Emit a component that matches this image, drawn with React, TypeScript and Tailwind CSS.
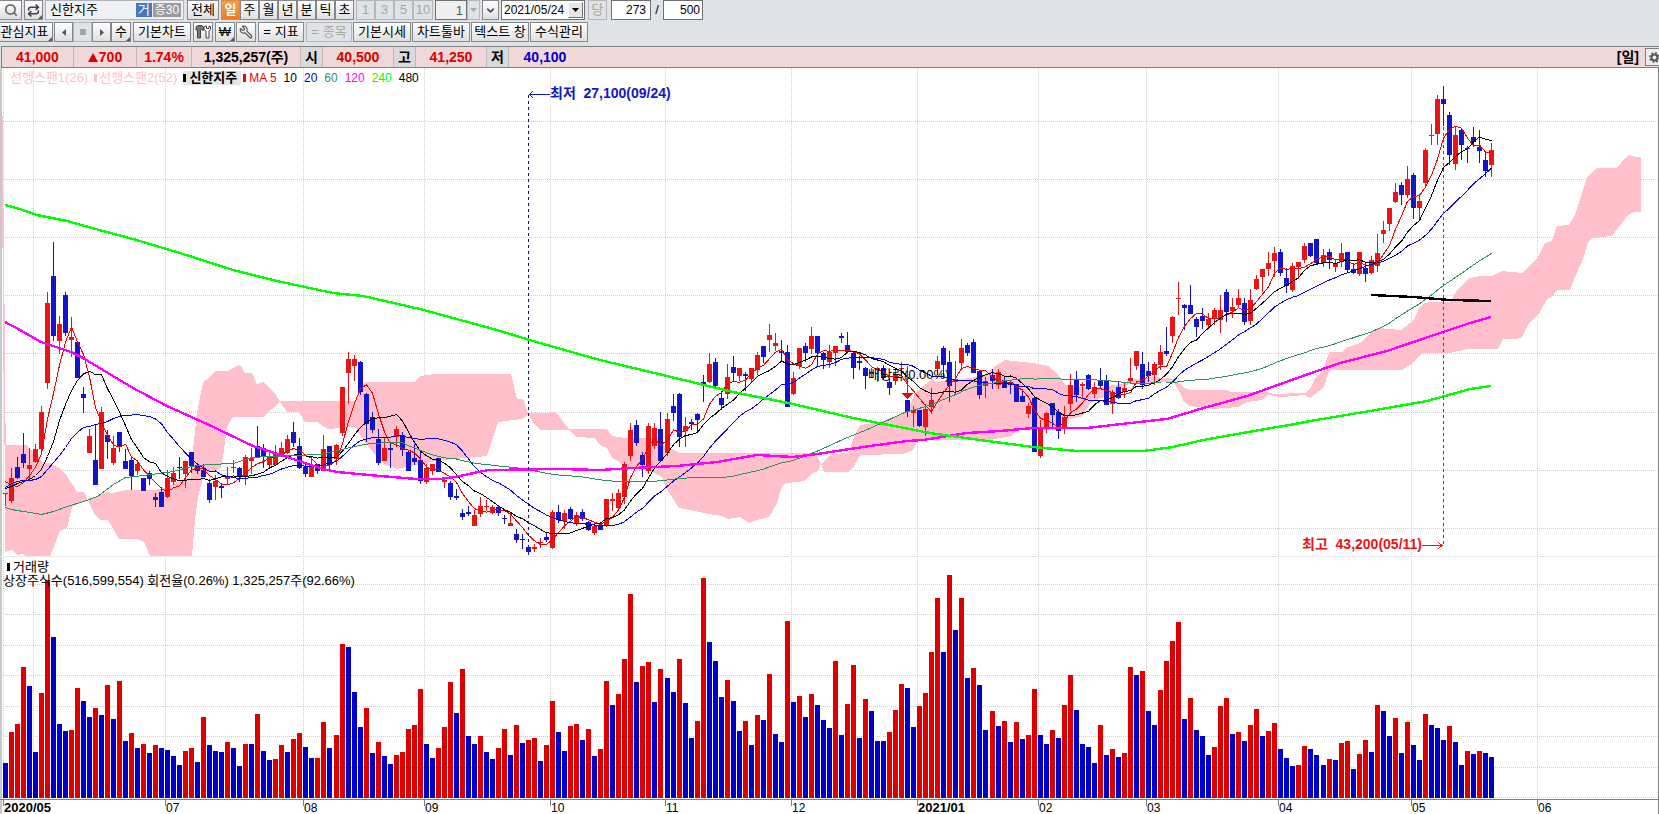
import React from 'react';
import { Search, Repeat, Wrench, ChevronDown } from 'lucide-react';

// All chart values are in pixels, measured from the top of the window.
const PRICE_TOP = 68;
const VOLUME_TOP = 557;
const VOLUME_BASE = 798;
const BAR_STEP = 6.0183;

const barX = (i: number) => 5 + Math.floor(i * BAR_STEP);

// [up, high, body top, body bottom, low]
const candles: number[][] = [
    [1, 493, 493, 494, 506], [1, 468, 478, 501, 503], [0, 457, 467, 478, 479], [0, 433, 454, 463, 468],
    [1, 448, 465, 469, 479], [1, 444, 449, 462, 463], [1, 406, 412, 449, 455], [1, 292, 303, 383, 389],
    [0, 242, 276, 336, 341], [1, 316, 324, 341, 354], [0, 292, 295, 333, 336], [1, 317, 337, 340, 357],
    [0, 342, 342, 378, 378], [0, 387, 394, 398, 413], [1, 429, 436, 453, 453], [0, 424, 460, 485, 485],
    [1, 407, 412, 469, 469], [0, 430, 435, 442, 459], [1, 436, 448, 463, 465], [0, 432, 432, 447, 452],
    [0, 449, 461, 469, 469], [0, 456, 460, 476, 490], [1, 460, 464, 471, 475], [0, 478, 478, 491, 491],
    [0, 471, 473, 479, 485], [0, 493, 497, 500, 507], [0, 487, 492, 507, 507], [1, 470, 478, 497, 498],
    [1, 467, 473, 482, 485], [0, 457, 467, 468, 479], [1, 461, 461, 474, 488], [0, 452, 452, 466, 473],
    [0, 463, 465, 471, 474], [0, 464, 470, 477, 477], [0, 479, 483, 500, 503], [1, 475, 481, 487, 500],
    [0, 483, 486, 488, 498], [1, 467, 476, 479, 484], [1, 460, 467, 468, 473], [0, 467, 468, 477, 482],
    [1, 455, 457, 477, 485], [1, 448, 458, 461, 474], [0, 426, 446, 457, 458], [0, 444, 448, 457, 468],
    [1, 451, 456, 465, 467], [1, 445, 454, 465, 465], [1, 442, 448, 457, 457], [1, 435, 439, 453, 454],
    [0, 422, 432, 443, 447], [0, 438, 446, 468, 469], [0, 462, 467, 474, 477], [1, 457, 466, 477, 477],
    [0, 464, 464, 471, 474], [1, 435, 449, 471, 471], [0, 446, 446, 465, 469], [1, 444, 445, 459, 465],
    [1, 387, 387, 433, 436], [1, 352, 359, 373, 404], [1, 355, 359, 366, 381], [0, 361, 362, 392, 395],
    [0, 393, 394, 424, 442], [0, 412, 417, 430, 433], [0, 429, 439, 463, 465], [1, 438, 448, 461, 461],
    [0, 444, 448, 450, 468], [1, 426, 429, 437, 447], [0, 432, 435, 450, 456], [0, 451, 452, 471, 471],
    [0, 444, 458, 462, 465], [0, 450, 460, 481, 484], [1, 464, 468, 482, 484], [1, 464, 464, 471, 475],
    [0, 458, 458, 472, 472], [1, 478, 480, 482, 488], [0, 481, 483, 497, 500], [0, 489, 496, 498, 500],
    [0, 509, 513, 517, 520], [0, 506, 512, 514, 516], [1, 510, 515, 526, 526], [1, 497, 506, 514, 517],
    [1, 500, 506, 507, 511], [1, 505, 507, 513, 514], [0, 505, 507, 513, 516], [0, 515, 518, 519, 524],
    [1, 513, 523, 526, 526], [0, 529, 534, 540, 543], [0, 534, 539, 540, 549], [0, 545, 547, 552, 555],
    [1, 544, 547, 549, 552], [1, 538, 542, 543, 548], [0, 533, 537, 540, 542], [1, 510, 512, 548, 549],
    [0, 505, 512, 520, 523], [1, 510, 513, 521, 529], [0, 507, 509, 519, 520], [1, 512, 515, 524, 526],
    [0, 509, 512, 519, 521], [0, 521, 522, 530, 531], [1, 522, 526, 533, 535], [0, 523, 525, 530, 530],
    [1, 499, 499, 526, 527], [1, 493, 499, 501, 511], [1, 489, 493, 508, 510], [1, 462, 464, 497, 504],
    [1, 423, 430, 456, 461], [0, 420, 425, 443, 446], [0, 452, 455, 465, 477], [1, 423, 426, 471, 474],
    [1, 423, 428, 446, 449], [0, 412, 429, 461, 461], [1, 413, 419, 453, 456], [0, 394, 406, 413, 421],
    [0, 393, 394, 437, 447], [1, 417, 426, 431, 447], [0, 419, 422, 424, 430], [0, 413, 414, 420, 432],
    [0, 375, 382, 385, 402], [1, 353, 364, 382, 383], [0, 358, 362, 386, 387], [0, 391, 398, 405, 410],
    [1, 364, 377, 394, 399], [0, 356, 367, 373, 381], [1, 368, 368, 376, 381], [0, 372, 374, 376, 391],
    [1, 368, 368, 379, 383], [1, 352, 355, 370, 375], [0, 346, 346, 357, 363], [1, 324, 335, 340, 352],
    [1, 333, 343, 346, 351], [0, 340, 351, 353, 361], [0, 345, 352, 407, 407], [1, 372, 378, 394, 395],
    [1, 348, 348, 366, 369], [0, 343, 346, 353, 362], [1, 327, 336, 349, 354], [0, 336, 336, 353, 366],
    [0, 352, 353, 360, 369], [1, 345, 352, 362, 368], [1, 346, 346, 353, 366], [0, 333, 336, 338, 343],
    [0, 332, 345, 352, 352], [0, 352, 353, 368, 379], [0, 356, 361, 363, 370], [0, 367, 368, 376, 389],
    [1, 368, 372, 374, 377], [1, 367, 368, 370, 382], [0, 365, 368, 378, 380], [0, 378, 382, 388, 395],
    [1, 370, 374, 381, 385], [1, 362, 368, 369, 376], [0, 400, 400, 412, 417], [1, 406, 410, 413, 427],
    [0, 410, 410, 426, 427], [1, 404, 409, 427, 436], [1, 388, 400, 407, 414], [1, 356, 361, 369, 375],
    [0, 346, 348, 365, 378], [0, 351, 362, 386, 402], [1, 361, 379, 382, 395], [1, 339, 348, 363, 370],
    [0, 343, 345, 353, 356], [0, 339, 342, 373, 373], [0, 370, 371, 395, 399], [1, 377, 381, 386, 398],
    [0, 369, 375, 381, 389], [1, 369, 372, 385, 389], [0, 377, 380, 388, 388], [0, 380, 382, 385, 394],
    [0, 384, 384, 402, 402], [0, 389, 396, 402, 402], [1, 403, 406, 414, 418], [0, 397, 398, 452, 452],
    [1, 420, 427, 456, 458], [1, 412, 413, 428, 433], [0, 403, 403, 415, 429], [0, 409, 412, 431, 439],
    [1, 406, 417, 428, 434], [1, 374, 385, 404, 411], [0, 371, 379, 395, 402], [1, 382, 384, 386, 398],
    [0, 374, 375, 389, 390], [1, 382, 387, 394, 398], [0, 368, 381, 386, 389], [0, 375, 381, 405, 405],
    [1, 390, 392, 404, 414], [0, 382, 387, 398, 399], [1, 382, 388, 392, 398], [1, 358, 378, 381, 384],
    [1, 351, 351, 366, 370], [0, 352, 364, 385, 389], [0, 362, 371, 376, 382], [1, 362, 364, 375, 385],
    [1, 345, 352, 365, 370], [0, 327, 351, 354, 356], [1, 316, 317, 336, 343], [1, 282, 298, 299, 315],
    [0, 304, 305, 308, 330], [0, 285, 305, 314, 314], [0, 317, 319, 327, 337], [0, 308, 316, 321, 329],
    [1, 313, 319, 325, 327], [1, 308, 310, 318, 325], [1, 295, 310, 320, 333], [0, 289, 292, 312, 322],
    [1, 298, 307, 311, 318], [1, 289, 298, 305, 308], [0, 298, 303, 322, 325], [1, 289, 300, 321, 325],
    [1, 275, 279, 289, 290], [1, 269, 269, 277, 292], [1, 252, 263, 269, 276], [1, 247, 253, 261, 277],
    [0, 249, 252, 273, 276], [0, 268, 278, 286, 293], [1, 263, 266, 290, 292], [1, 262, 262, 267, 279],
    [1, 243, 246, 260, 263], [0, 243, 243, 256, 257], [0, 239, 239, 263, 264], [1, 249, 255, 263, 267],
    [0, 249, 252, 260, 269], [1, 260, 263, 267, 272], [1, 243, 253, 262, 267], [0, 252, 252, 270, 272],
    [0, 263, 269, 273, 274], [1, 252, 252, 274, 276], [0, 263, 268, 274, 282], [1, 256, 260, 273, 274],
    [1, 234, 253, 266, 272], [1, 221, 230, 234, 243], [1, 208, 208, 224, 231], [1, 183, 192, 202, 203],
    [0, 182, 185, 195, 205], [1, 166, 179, 195, 198], [0, 173, 175, 208, 219], [1, 194, 201, 208, 221],
    [1, 148, 150, 183, 187], [1, 124, 135, 136, 145], [1, 95, 99, 134, 145], [0, 86, 99, 104, 126],
    [0, 112, 115, 155, 165], [1, 127, 135, 164, 170], [0, 128, 130, 145, 160], [0, 146, 148, 149, 163],
    [0, 127, 137, 142, 147], [0, 130, 147, 151, 163], [0, 151, 160, 171, 177], [1, 143, 150, 165, 177],
];

// Bar heights, negative when volume fell against the day before
const volumes: number[] = [
    -35, 66, 74, 131, -112, -46, 105, 218, -161, -74, -67, 68, 110, -97, -81, 90, -83, 113, -79, 117,
    -57, 65, -50, 54, -45, 53, -50, -48, -42, -33, 47, 50, -36, 81, -53, -47, -46, 56, -50, -32,
    54, -54, 84, -47, -38, 39, 53, -46, 59, 65, -51, -40, 40, 76, -50, 63, 154, -151, -106, -71,
    90, -45, 56, -42, -34, 43, 46, 69, 73, 109, -54, -40, 50, 71, 116, -85, 129, -62, -54, 62,
    -46, -39, 50, 69, -43, 73, -55, 58, 60, -37, 53, 97, -66, -47, 72, 74, -58, 69, -42, 49,
    117, -93, 104, 139, 204, -116, 132, 136, -96, 129, -120, -106, 139, -95, -60, 77, 220, -156, -137, -101,
    118, -97, -67, 77, -53, 83, -78, 124, -64, -56, 177, -96, 102, -81, 104, -93, -78, -70, 137, -63,
    94, 133, -60, 99, -87, -57, -57, 66, 88, 114, -110, -71, 92, 105, 146, 200, -146, 223, -168, 200,
    -120, 130, -113, -68, 87, -72, 77, -56, 76, -59, 63, 109, -63, -54, 68, -60, 93, 123, -88, -54,
    -51, -35, 73, -43, 49, -41, 45, 131, -123, 127, -87, -73, 108, 137, 157, 176, -79, 100, -68, -62,
    -43, 51, 92, 100, -64, 66, -57, 73, 89, -62, 67, 75, -49, -40, -32, 33, 52, -49, -43, -33,
    39, -38, 55, 57, -29, 44, 58, -46, 93, -87, -62, 80, -45, 76, -53, -38, 84, -73, -70, -58,
    72, -56, -33, 47, -44, 47, -45, -41,
];

const clouds: string[] = [
    '2,116 3,116 3,209 4,209 4,304 5,304 5,400 6,445 4,445 4,372 3,372 3,248 2,248',
    '5,445 27,445 34,453 42,462 50,463 59,468 65,473 77,492 84,492 88,501 77,503 72,507 67,528 60,531 53,549 50,556 25,556 23,554 17,555 12,550 5,552',
    '88,501 100,495 107,492 113,493 126,490 155,490 167,487 177,482 191,478 193,450 197,413 203,382 208,379 215,371 228,371 233,368 240,365 245,373 252,373 257,384 263,382 275,393 280,402 272,409 263,417 233,417 227,427 224,450 221,468 210,472 203,478 198,497 195,520 192,556 150,556 144,542 138,539 119,539 108,520 101,520 95,515',
    '280,402 282,401 355,401 362,386 365,382 415,382 420,376 435,374 511,374 517,399 523,399 528,413 528,415 522,419 498,422 487,456 443,460 420,464 397,469 385,465 373,452 363,440 355,427 328,429 317,422 305,422 299,412 287,412',
    '528,413 550,413 553,412 557,413 564,423 569,429 607,429 612,436 625,438 657,438 663,445 680,453 812,453 817,456 821,464 818,471 812,473 805,481 787,483 782,486 777,503 769,517 757,520 750,523 740,517 728,519 722,516 708,514 700,512 679,508 666,488 662,477 653,472 633,468 623,465 618,461 612,458 607,448 600,445 595,438 577,437 569,430 540,430 533,422',
    '821,464 827,458 832,454 848,453 855,435 860,425 877,423 907,412 915,393 932,379 937,382 963,379 983,376 997,365 1005,360 1013,361 1033,363 1048,366 1057,373 1065,385 1093,388 1122,384 1130,380 1153,377 1175,379 1175,382 1130,383 1120,390 1090,403 1083,416 1067,420 1063,430 1017,430 1012,436 990,440 918,440 913,450 903,454 860,455 854,466 848,472 824,472',
    '1173,380 1180,383 1184,388 1190,390 1225,390 1232,392 1268,392 1273,394 1305,393 1310,389 1316,377 1322,372 1326,362 1329,352 1342,352 1348,347 1360,343 1372,332 1378,328 1401,330 1414,320 1419,308 1425,303 1430,302 1450,302 1457,290 1470,278 1480,276 1492,276 1502,271 1522,273 1530,266 1538,257 1545,243 1552,241 1557,226 1569,225 1575,215 1582,193 1587,178 1593,171 1598,168 1617,168 1625,158 1630,155 1635,157 1641,157 1641,212 1634,212 1628,215 1612,236 1593,238 1588,242 1582,262 1575,277 1570,290 1557,290 1552,297 1547,299 1540,312 1528,325 1522,337 1517,339 1503,339 1498,349 1467,349 1450,353 1422,353 1413,363 1402,370 1332,370 1328,373 1324,387 1310,398 1305,395 1282,397 1268,395 1262,400 1247,402 1238,407 1213,409 1190,406 1184,402 1180,393',
];

const ma120 = '5,322 20,330 41,342 71,352 83,358 133,388 167,406 207,424 253,446 287,457 323,469 337,472 380,476 417,479 440,479 455,477 488,470 560,469 600,470 633,468 677,466 717,462 757,455 793,457 817,454 870,446 907,441 923,440 967,433 1000,431 1033,428 1087,428 1130,423 1167,419 1200,409 1247,396 1300,377 1340,363 1387,351 1437,334 1470,323 1491,317';
const ma240 = '5,205 20,209 37,215 67,221 103,231 133,239 180,253 233,270 277,281 333,293 363,296 420,309 497,330 533,341 600,360 667,376 733,392 793,404 853,418 930,433 980,440 1033,447 1077,451 1143,451 1173,447 1203,440 1277,427 1290,425 1310,421 1370,411 1427,401 1470,389 1491,386';
const ma480 = '1371,295 1413,297 1450,300 1491,301';

const closes = candles.map(c => (c[0] ? c[2] : c[3]));

// head covers the days that have too little history loaded
const movingAverage = (days: number, head: string) => {
    const points = [head];
    for (let i = days - 1; i < closes.length; i++) {
        const sum = closes.slice(i - days + 1, i + 1).reduce((a, b) => a + b, 0);
        points.push(`${barX(i)},${(sum / days).toFixed(1)}`);
    }
    return points.join(' ');
};

const ma5 = movingAverage(5, '5,481 11,485 17,486 23,482');
const ma10 = movingAverage(10, '5,488 11,486 17,483 23,481 29,479 35,475 41,469 47,456 53,441');
const ma20 = movingAverage(20, '5,487 11,483 17,481 23,480 29,480 35,479 41,476 47,469 53,462 59,455 65,447 71,438 77,432 83,427 89,426 95,424 101,423 107,421 113,418');
const ma60 = movingAverage(60, '5,507 11,509 23,511 41,514 53,511 67,506 83,501 97,496 113,484 125,477 143,475 173,471 191,466 209,464 233,463 251,457 269,456 293,455 320,454 333,451 350,447');

const months = [
    { x: 3, label: '2020/05', bold: true },
    { x: 165, label: '07' },
    { x: 303, label: '08' },
    { x: 424, label: '09' },
    { x: 550, label: '10' },
    { x: 665, label: '11' },
    { x: 791, label: '12' },
    { x: 917, label: '2021/01', bold: true },
    { x: 1038, label: '02' },
    { x: 1146, label: '03' },
    { x: 1278, label: '04' },
    { x: 1411, label: '05' },
    { x: 1537, label: '06' },
];
const gridX = [33, ...months.map(m => m.x)];
const priceGridY = [121, 179, 237, 295, 353, 412, 470, 528];
const volumeGridY = [584, 614, 645, 675, 706, 736, 767, 797];

const Grid = ({ rows }: { rows: number[] }) => (
    <g stroke="#cfcfcf" strokeDasharray="1 1">
        {gridX.map(x => (
            <line key={x} x1={x + 0.5} x2={x + 0.5} y1={0} y2={900} />
        ))}
        {rows.map(y => (
            <line key={y} x1={3} x2="100%" y1={y + 0.5} y2={y + 0.5} />
        ))}
    </g>
);

const PriceChart = () => (
    <svg className="block h-[488px] w-full" role="img" aria-label="신한지주 일봉" shapeRendering="crispEdges">
        <g transform={`translate(0 ${-PRICE_TOP})`}>
            <Grid rows={priceGridY} />
            {clouds.map(points => (
                <polygon key={points} points={points} fill="#ffc0cb" />
            ))}
            {candles.map(([up, high, top, bottom, low], i) => (
                <g key={i} fill={up ? '#eb1414' : '#1414c8'}>
                    <rect x={barX(i)} y={high} width={1} height={Math.max(low - high, 1)} />
                    <rect x={barX(i) - 2} y={top} width={5} height={Math.max(bottom - top, 1)} />
                </g>
            ))}
            <g fill="none" transform="translate(0.5 0.5)">
                <polyline points={ma5} stroke="#f00000" />
                <polyline points={ma10} stroke="#000000" />
                <polyline points={ma20} stroke="#0000e6" />
                <polyline points={ma60} stroke="#2e9060" />
            </g>
            <g fill="none" strokeWidth={2.4}>
                <polyline points={ma120} stroke="#ff00ff" />
                <polyline points={ma240} stroke="#00ff00" />
                <polyline points={ma480} stroke="#000000" />
            </g>

            {/* lowest and highest price */}
            <line x1={528.5} x2={528.5} y1={95} y2={546} stroke="#14146e" strokeDasharray="3 3" />
            <path d="M529 94.5h21M533 91l-3 3.5 3 3.5" fill="none" stroke="#1414c8" />
            <text x={550} y={98} className="text-[14px] font-bold" fill="#1414c8">최저&nbsp; 27,100(09/24)</text>
            <line x1={1443.5} x2={1443.5} y1={127} y2={546} stroke="#dc1414" strokeDasharray="3 3" />
            <path d="M1422 545.5h20M1438 542l4 3.5-4 3.5" fill="none" stroke="#eb1414" />
            <text x={1422} y={549} textAnchor="end" className="text-[14px] font-bold" fill="#eb1414">최고&nbsp; 43,200(05/11)</text>

            {/* ex-dividend mark */}
            <line x1={907.5} x2={907.5} y1={366} y2={394} stroke="#eb1414" />
            <path d="M902 393h11l-5 6h-1z" fill="#f00000" />
            <text x={868} y={379} className="text-[13px]">배당락(0.00%)</text>
        </g>
    </svg>
);

const VolumeChart = () => (
    <svg className="block h-[242px] w-full" role="img" aria-label="거래량" shapeRendering="crispEdges">
        <g transform={`translate(0 ${-VOLUME_TOP})`}>
            <Grid rows={volumeGridY} />
            {volumes.map((v, i) => (
                <rect key={i} x={barX(i) - 2} y={VOLUME_BASE - Math.abs(v)} width={5} height={Math.abs(v)} fill={v > 0 ? '#dc0000' : '#0000c8'} />
            ))}
        </g>
    </svg>
);

const TimeAxis = () => (
    <svg className="block h-[15px] w-full">
        <path d="M0 .5h4000" stroke="#808080" />
        {months.map(m => (
            <g key={m.x}>
                <path d={`M${m.x + 0.5} 0v7`} stroke="#808080" />
                <text x={m.x + 1} y={13} className={m.bold ? 'text-[13px] font-bold' : 'text-[12px]'}>{m.label}</text>
            </g>
        ))}
    </svg>
);

interface ToolButtonProps {
    children: React.ReactNode;
    width: string;
    label?: string;
    disabled?: boolean;
    active?: boolean;
    corner?: boolean;
}

const ToolButton: React.FC<ToolButtonProps> = ({ children, width, label, disabled, active, corner }) => {
    let tone = 'border-[#85888d] bg-linear-to-b from-white to-[#dfdfdf] text-black';
    if (disabled) tone = 'border-[#b4b7bb] bg-[#dfe3e8] text-[#a9a79c]';
    if (active) tone = 'border-[#e08a3c] bg-linear-to-b from-[#f0a050] to-[#f07818] font-bold text-white';
    return (
        <button
            type="button"
            aria-label={label}
            disabled={disabled}
            className={`relative flex h-5 shrink-0 items-center justify-center gap-1 overflow-hidden border whitespace-nowrap ${tone} ${width}`}
        >
            {children}
            {corner && (
                <svg className="absolute right-0 bottom-0 size-1" viewBox="0 0 4 4">
                    <path d="M4 0v4H0z" fill="#555" />
                </svg>
            )}
        </button>
    );
};

const Quote = ({ width, tone, children }: { width: string; tone: string; children: React.ReactNode }) => (
    <div className={`flex items-center justify-center border-r border-[#c4b6b6] ${width} ${tone}`}>{children}</div>
);

const Mark = ({ tone }: { tone: string }) => <span className={`h-2 w-[3px] shrink-0 ${tone}`} />;

const App = () => {
    return (
        <div className="min-h-screen overflow-x-hidden bg-[#dfe3e8] font-['Liberation_Sans','Noto_Sans_CJK_KR',sans-serif] text-[13px] leading-[14px] text-black">
            <header>
                <div className="flex h-5 items-center">
                    <ToolButton width="-ml-px mr-[2px] w-[23px]" label="종목 찾기">
                        <Search size={14} strokeWidth={3} color="#6b6b6b" className="shrink-0" />
                    </ToolButton>
                    <ToolButton width="mr-[2px] w-[19px]" label="종목 전환" corner>
                        <Repeat size={13} strokeWidth={3} color="#444" className="shrink-0" />
                    </ToolButton>
                    <div className="mr-[3px] flex h-5 w-[139px] items-center gap-px border border-[#b0b4ba] bg-[#eff1f5] pr-[2px] pl-1">
                        <input aria-label="종목명" defaultValue="신한지주" className="min-w-0 flex-1 bg-transparent outline-none" />
                        <span className="w-4 bg-[#4678be] text-center text-white">거</span>
                        <span className="w-7 bg-[#9b9b9b] text-center text-[12px] text-white">증30</span>
                    </div>
                    <ToolButton width="mr-[2px] w-8">전체</ToolButton>
                    <ToolButton width="w-[19px]" active>일</ToolButton>
                    <ToolButton width="w-[19px]">주</ToolButton>
                    <ToolButton width="w-[19px]">월</ToolButton>
                    <ToolButton width="w-[19px]">년</ToolButton>
                    <ToolButton width="w-[19px]">분</ToolButton>
                    <ToolButton width="w-[19px]">틱</ToolButton>
                    <ToolButton width="mr-[2px] w-[19px]">초</ToolButton>
                    <ToolButton width="w-[19px]" disabled>1</ToolButton>
                    <ToolButton width="w-[19px]" disabled>3</ToolButton>
                    <ToolButton width="w-[19px]" disabled>5</ToolButton>
                    <ToolButton width="mr-[2px] w-5" disabled>10</ToolButton>
                    <input aria-label="간격" defaultValue="1" className="h-5 w-8 border border-[#707070] bg-[#efefef] pr-[3px] text-right text-[#555] outline-none" />
                    <ToolButton width="mr-[2px] w-[13px]" label="간격 선택" disabled>
                        <svg className="w-[7px] shrink-0" viewBox="0 0 7 4"><path d="M0 0h7L3.500 4z" fill="#a9a9a9" /></svg>
                    </ToolButton>
                    <ToolButton width="mr-[2px] w-[17px]" label="더보기">
                        <ChevronDown size={11} strokeWidth={4} color="#555" className="shrink-0" />
                    </ToolButton>
                    <div className="relative mr-[3px] h-5 w-[84px]">
                        <select aria-label="기준일" className="h-5 w-full appearance-none border border-[#707070] bg-white pl-[2px] text-[12px] outline-none">
                            <option>2021/05/24</option>
                        </select>
                        <span className="pointer-events-none absolute top-[2px] right-[2px] flex h-4 w-[15px] items-center justify-center border border-t-white border-r-[#707070] border-b-[#707070] border-l-white bg-[#e6e6e6]">
                            <svg className="w-[7px]" viewBox="0 0 7 4"><path d="M0 0h7L3.500 4z" /></svg>
                        </span>
                    </div>
                    <ToolButton width="mr-1 w-[19px]" disabled>당</ToolButton>
                    <input aria-label="표시 봉수" defaultValue="273" className="h-5 w-10 border border-[#707070] bg-white pr-1 text-right text-[12px] outline-none" />
                    <span className="w-3 text-center">/</span>
                    <input aria-label="전체 봉수" defaultValue="500" className="h-5 w-10 border border-[#707070] bg-white pr-[2px] text-right text-[12px] outline-none" />
                </div>

                <div className="mt-[2px] flex h-5 items-center">
                    <ToolButton width="-ml-1 mr-px w-[57px]" corner>관심지표</ToolButton>
                    <ToolButton width="w-[19px]" label="이전">
                        <svg className="h-[7px] shrink-0" viewBox="0 0 4 7"><path d="M4 0v7L0 3.500z" fill="#555" /></svg>
                    </ToolButton>
                    <ToolButton width="w-[19px]" label="정지" disabled>
                        <span className="size-[6px] bg-[#a5a5a5]" />
                    </ToolButton>
                    <ToolButton width="w-[19px]" label="다음">
                        <svg className="h-[7px] shrink-0" viewBox="0 0 4 7"><path d="M0 0v7L4 3.500z" fill="#555" /></svg>
                    </ToolButton>
                    <ToolButton width="mr-[2px] w-5" corner>수</ToolButton>
                    <ToolButton width="mr-[2px] w-[58px]">기본차트</ToolButton>
                    <ToolButton width="mr-[2px] w-5" label="도구">
                        <svg className="h-[14px] w-4 shrink-0" viewBox="0 0 16 14">
                            <path d="M1 5V2l2-1.500h4L9 3v2H7V4L5.500 5v8h-3V5z" fill="#777" stroke="#444" />
                            <path d="M9 1.500v3l2 1.500v7h3V6l1.500-1.500v-3L14 1v2.500h-2.500V1z" fill="#fff" stroke="#444" />
                        </svg>
                    </ToolButton>
                    <ToolButton width="mr-px w-5" corner>₩</ToolButton>
                    <ToolButton width="mr-[2px] w-5" label="설정">
                        <Wrench size={14} strokeWidth={2} color="#555" className="shrink-0 -scale-x-100" />
                    </ToolButton>
                    <ToolButton width="mr-[2px] w-[46px]"><span>=</span><span>지표</span></ToolButton>
                    <ToolButton width="mr-px w-[46px]" disabled><span>=</span><span>종목</span></ToolButton>
                    <ToolButton width="mr-px w-[58px]">기본시세</ToolButton>
                    <ToolButton width="mr-px w-[58px]">차트툴바</ToolButton>
                    <ToolButton width="mr-px w-[58px]">텍스트 창</ToolButton>
                    <ToolButton width="w-[58px]">수식관리</ToolButton>
                </div>
            </header>

            <section className="mt-1 ml-px flex h-[22px] border border-r-0 border-[#808080] bg-[#f0d8d8] text-[14px] font-bold">
                <Quote width="w-[72px]" tone="text-[#dc0000]">41,000</Quote>
                <Quote width="w-[63px] gap-px" tone="text-[#dc0000]">
                    <svg className="w-[10px]" viewBox="0 0 10 9"><path d="M5 0l5 9H0z" fill="#dc0000" /></svg>
                    700
                </Quote>
                <Quote width="w-[55px]" tone="text-[#dc0000]">1.74%</Quote>
                <Quote width="w-[109px]" tone="">1,325,257(주)</Quote>
                <Quote width="w-[22px]" tone="bg-[#dadada]">시</Quote>
                <Quote width="w-[71px]" tone="text-[#dc0000]">40,500</Quote>
                <Quote width="w-[22px]" tone="bg-[#dadada]">고</Quote>
                <Quote width="w-[71px]" tone="text-[#dc0000]">41,250</Quote>
                <Quote width="w-[22px]" tone="bg-[#dadada]">저</Quote>
                <div className="flex w-[72px] items-center justify-center text-[#0000c8]">40,100</div>
                <span className="mr-[6px] ml-auto self-center">[일]</span>
                <button type="button" aria-label="차트 설정" className="my-px w-[14px] overflow-hidden border border-r-0 border-[#808080] bg-[#ececec] pl-[3px]">
                    <svg className="size-[11px]" viewBox="0 0 11 11" fill="none" stroke="#555">
                        <circle cx="5.500" cy="5.500" r="3" strokeWidth="2" />
                        <circle cx="5.500" cy="5.500" r="4.700" strokeWidth="1.500" strokeDasharray="1.800 1.890" />
                    </svg>
                </button>
            </section>

            <main className="relative border-r border-[#808080] bg-white shadow-[inset_2px_0_0_#c8c8c8]">
                <PriceChart />
                <div className="absolute top-[3px] left-[10px] flex h-[14px] items-center gap-[2px]">
                    <span className="text-[#ffc0cb]">선행스팬1(26)</span>
                    <div className="ml-1 flex items-center gap-[2px]">
                        <Mark tone="bg-[#ffc0cb]" />
                        <span className="text-[#ffc0cb]">선행스팬2(52)</span>
                    </div>
                    <span className="ml-1 flex items-center gap-[3px] bg-[#e6e6e6] pr-1">
                        <Mark tone="bg-black" />
                        <span className="font-bold">신한지주</span>
                    </span>
                    <Mark tone="bg-[#f00000]" />
                    <div className="ml-px flex gap-[7px] text-[12px]">
                        <span className="text-[#f00000]">MA 5</span>
                        <span>10</span>
                        <span className="text-[#0000e6]">20</span>
                        <span className="text-[#2e9060]">60</span>
                        <span className="text-[#ff00ff]">120</span>
                        <span className="text-[#00ff00]">240</span>
                        <span>480</span>
                    </div>
                </div>
                <div className="relative border-t border-[#e8e8e8]">
                    <VolumeChart />
                    <div className="absolute top-[3px] left-[3px]">
                        <p className="flex items-center gap-[3px] pl-1"><Mark tone="bg-black" />거래량</p>
                        <p>상장주식수(516,599,554) 회전율(0.26%) 1,325,257주(92.66%)</p>
                    </div>
                </div>
                <TimeAxis />
            </main>
        </div>
    );
};

export default App;
